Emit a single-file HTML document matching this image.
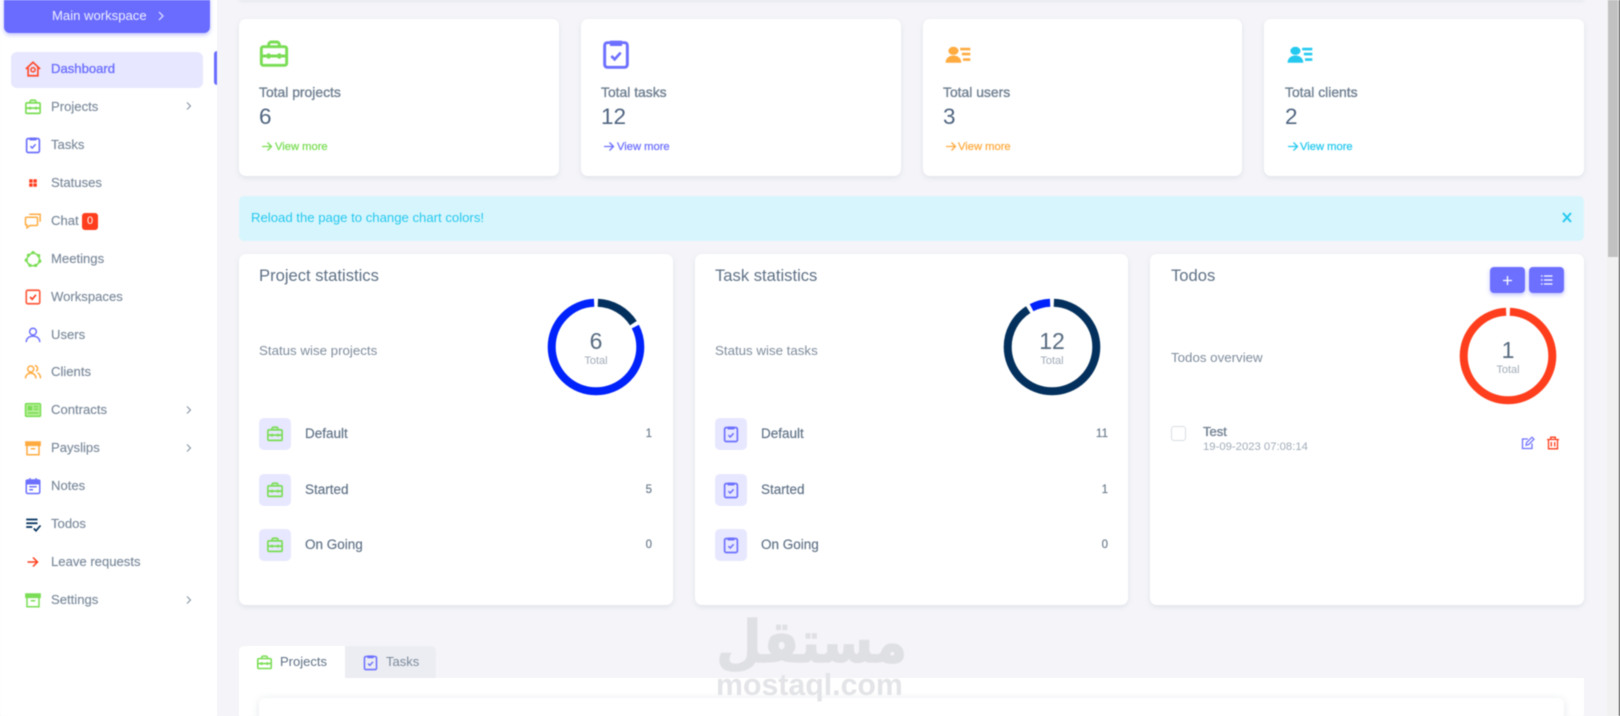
<!DOCTYPE html>
<html><head><meta charset="utf-8">
<style>
html,body{margin:0;padding:0;width:1620px;height:716px;overflow:hidden;background:#f5f5f9}
body{font-family:"Liberation Sans",sans-serif;position:relative;color:#566a7f}
#w{position:absolute;left:0;top:0;width:1620px;height:716px;overflow:hidden;filter:blur(.4px)}
.a{position:absolute}
.t{position:absolute;white-space:nowrap;line-height:20px}
.card{position:absolute;background:#fff;border-radius:7px;box-shadow:0 2px 6px rgba(67,89,113,.12)}
.n{position:absolute;left:51px;white-space:nowrap;line-height:20px;font-size:13.1px;color:#7b8a9b;-webkit-text-stroke:.15px #7b8a9b}
.l{font-size:13.9px;color:#6f7f90;-webkit-text-stroke:.35px #6f7f90}
.v{font-size:22.5px;color:#4f6480}
.m{font-size:11.2px;-webkit-text-stroke:.25px currentColor}
.h{font-size:16.6px;color:#5f7186}
.s{font-size:13.3px;color:#7f8d9d}
.r{font-size:13.5px;color:#5f7186;-webkit-text-stroke:.15px #5f7186}
.c{font-size:11.5px;color:#6f7f90;text-align:right;-webkit-text-stroke:.2px #6f7f90}
.b{position:absolute;width:32px;height:32px;border-radius:5px;background:#e7e7ff}
svg{position:absolute;overflow:visible}
.tot{position:absolute;text-align:center;width:80px;font-size:11px;color:#a1acb8;line-height:14px}
.num{position:absolute;text-align:center;width:80px;font-size:23px;color:#566a7f;line-height:26px}
</style></head><body><div id="w">
<svg width="0" height="0" style="position:absolute">
<defs>
<symbol id="bag" viewBox="0 0 24 24"><path d="M8 6.500V5a2 2 0 0 1 2-2h4a2 2 0 0 1 2 2v1.500M4 6.500h16a1.500 1.500 0 0 1 1.500 1.500v11a1.500 1.500 0 0 1-1.500 1.500H4A1.500 1.500 0 0 1 2.500 19V8A1.500 1.500 0 0 1 4 6.500zM2.500 13.500h19M8 11.500v4M16 11.500v4" fill="none" stroke="currentColor" stroke-width="2.200" stroke-linejoin="round"/></symbol>
<symbol id="task" viewBox="0 0 24 24"><rect x="3.500" y="3.500" width="17" height="18.500" rx="2" fill="none" stroke="currentColor" stroke-width="2.200"/><rect x="7.500" y="2" width="9" height="4" fill="currentColor"/><path d="M8.500 13.500l2.500 2.500 4.500-5" fill="none" stroke="currentColor" stroke-width="2"/></symbol>
<symbol id="ul" viewBox="0 0 24 24"><circle cx="7.500" cy="7.500" r="4.500" fill="currentColor"/><path d="M0.500 20.500c0-5 3-8 7-8s7 3 7 8z" fill="currentColor"/><path d="M13.500 5.500h9M15 11h7.500M16 17h6.500" stroke="currentColor" stroke-width="2.800" fill="none"/></symbol>
</defs></svg>

<!-- Sidebar -->
<div class="a" style="left:0;top:0;width:217px;height:716px;background:#fff"></div>
<div class="a" style="left:4px;top:-6px;width:206px;height:39px;background:#696cff;border-radius:6px;box-shadow:0 2px 4px rgba(105,108,255,.4)"></div>
<div class="t" style="left:52px;top:6px;font-size:13.1px;color:#eeeeff">Main workspace</div>
<svg style="left:156px;top:10px" width="10" height="12" viewBox="0 0 10 12"><path d="M3 2l4 4-4 4" fill="none" stroke="#e8e8ff" stroke-width="1.200"/></svg>
<div class="a" style="left:11px;top:52px;width:192px;height:36px;background:#e7e7ff;border-radius:6px"></div>
<div class="a" style="left:214px;top:51px;width:3px;height:34px;background:#696cff;border-radius:3px 0 0 3px"></div>

<div class="n" style="top:59px;color:#6d70ff;-webkit-text-stroke:.35px #6d70ff">Dashboard</div>
<div class="n" style="top:97px">Projects</div>
<div class="n" style="top:135px">Tasks</div>
<div class="n" style="top:173px">Statuses</div>
<div class="n" style="top:211px">Chat</div>
<div class="a" style="left:82px;top:213px;width:16px;height:17px;background:#ff3e1d;border-radius:3px;color:#fff;font-size:11px;line-height:17px;text-align:center">0</div>
<div class="n" style="top:249px">Meetings</div>
<div class="n" style="top:287px">Workspaces</div>
<div class="n" style="top:325px">Users</div>
<div class="n" style="top:362px">Clients</div>
<div class="n" style="top:400px">Contracts</div>
<div class="n" style="top:438px">Payslips</div>
<div class="n" style="top:476px">Notes</div>
<div class="n" style="top:514px">Todos</div>
<div class="n" style="top:552px">Leave requests</div>
<div class="n" style="top:590px">Settings</div>

<svg style="left:184px;top:100px" width="10" height="12" viewBox="0 0 10 12"><path d="M3 2.500l3.500 3.500-3.500 3.500" fill="none" stroke="#8592a3" stroke-width="1.100"/></svg>
<svg style="left:184px;top:404px" width="10" height="12" viewBox="0 0 10 12"><path d="M3 2.500l3.500 3.500-3.500 3.500" fill="none" stroke="#8592a3" stroke-width="1.100"/></svg>
<svg style="left:184px;top:442px" width="10" height="12" viewBox="0 0 10 12"><path d="M3 2.500l3.500 3.500-3.500 3.500" fill="none" stroke="#8592a3" stroke-width="1.100"/></svg>
<svg style="left:184px;top:594px" width="10" height="12" viewBox="0 0 10 12"><path d="M3 2.500l3.500 3.500-3.500 3.500" fill="none" stroke="#8592a3" stroke-width="1.100"/></svg>

<!-- sidebar icons -->
<svg style="left:24px;top:60px" width="18" height="18" viewBox="0 0 24 24"><path d="M2.500 12L12 3l9.500 9M5.500 10v11h13V10" fill="none" stroke="#ff4a2b" stroke-width="2.200"/><circle cx="12" cy="13" r="2.800" fill="none" stroke="#ff4a2b" stroke-width="2"/></svg>
<svg style="left:24px;top:98px;color:#7add55" width="18" height="18" viewBox="0 0 24 24"><use href="#bag"/></svg>
<svg style="left:24px;top:136px;color:#6d70ff" width="18" height="18" viewBox="0 0 24 24"><use href="#task"/></svg>
<svg style="left:24px;top:174px" width="18" height="18" viewBox="0 0 18 18"><path d="M5.200 5.200h3.400v3.400H5.200zM9.400 5.200h3.400v3.400H9.400zM5.200 9.400h3.400v3.400H5.200zM9.400 9.400h3.400v3.400H9.400z" fill="#ff3e1d"/></svg>
<svg style="left:24px;top:212px" width="18" height="18" viewBox="0 0 24 24"><path d="M3.500 7h13a1.500 1.500 0 0 1 1.500 1.500v8a1.500 1.500 0 0 1-1.500 1.500H8l-4 3v-3.500A1.500 1.500 0 0 1 2 16.500v-8A1.500 1.500 0 0 1 3.500 7zM7 3h14.500v10" fill="none" stroke="#ffab40" stroke-width="2"/></svg>
<svg style="left:24px;top:250px" width="18" height="18" viewBox="0 0 24 24"><path d="M6 7.500L12 3l7.500 4.500 2 7.500L16 21H8l-5.500-7z" fill="none" stroke="#7add55" stroke-width="2"/><g fill="#7add55"><circle cx="12" cy="3.500" r="2.200"/><circle cx="19.500" cy="7.500" r="2.200"/><circle cx="21" cy="15" r="2.200"/><circle cx="15.500" cy="20.500" r="2.200"/><circle cx="8" cy="20.500" r="2.200"/><circle cx="3" cy="13.500" r="2.200"/><circle cx="6" cy="7" r="2.200"/></g></svg>
<svg style="left:24px;top:288px" width="18" height="18" viewBox="0 0 24 24"><rect x="3" y="3" width="18" height="18" rx="2" fill="none" stroke="#ff5a3c" stroke-width="2.200"/><path d="M8 12l3 3 5-6" fill="none" stroke="#ff3e1d" stroke-width="2.200"/></svg>
<svg style="left:24px;top:326px" width="18" height="18" viewBox="0 0 24 24"><circle cx="12" cy="7.500" r="4.500" fill="none" stroke="#6d70ff" stroke-width="2"/><path d="M3 21.500c0-5 4-8 9-8s9 3 9 8" fill="none" stroke="#6d70ff" stroke-width="2"/></svg>
<svg style="left:24px;top:363px" width="18" height="18" viewBox="0 0 24 24"><circle cx="9" cy="8" r="4" fill="none" stroke="#ffab40" stroke-width="2"/><path d="M2 20.500c0-4 3-7 7-7s7 3 7 7M14.500 3.500a4 4 0 0 1 1.500 7.500M18 13c2.500 1.200 4 4 4 7.500" fill="none" stroke="#ffab40" stroke-width="2"/></svg>
<svg style="left:24px;top:401px" width="18" height="18" viewBox="0 0 24 24"><rect x="2" y="3.500" width="20" height="17" rx="1.500" fill="#b5ef96" stroke="#7add55" stroke-width="2"/><path d="M5 6.500h6v6H5z" fill="#7add55"/><path d="M13 7.500h6M13 11h6M5 16h14" stroke="#7add55" stroke-width="2" fill="none"/></svg>
<svg style="left:24px;top:439px" width="18" height="18" viewBox="0 0 24 24"><path d="M2.500 4h19v4.500h-19z" fill="#ffab40" stroke="#ffab40" stroke-width="2"/><path d="M4 8.500V21h16V8.500M9 13h6" fill="none" stroke="#ffab40" stroke-width="2"/></svg>
<svg style="left:24px;top:477px" width="18" height="18" viewBox="0 0 24 24"><rect x="3" y="4" width="18" height="18" rx="2" fill="none" stroke="#6d70ff" stroke-width="2"/><path d="M3 5h18v4H3zM8 1.500v4M16 1.500v4" fill="#6d70ff" stroke="#6d70ff" stroke-width="2"/><path d="M7 13h10M7 17h5" stroke="#6d70ff" stroke-width="2" fill="none"/></svg>
<svg style="left:24px;top:515px" width="18" height="18" viewBox="0 0 24 24"><path d="M3 6h15M3 11h15M3 16h8" stroke="#03305c" stroke-width="2.400" fill="none"/><path d="M13 18l3 3 6-7" stroke="#03305c" stroke-width="2.200" fill="none"/></svg>
<svg style="left:27px;top:556px" width="12" height="12" viewBox="0 0 24 24"><path d="M1 12h20M12 3l9 9-9 9" fill="none" stroke="#ff3e1d" stroke-width="3"/></svg>
<svg style="left:24px;top:591px" width="18" height="18" viewBox="0 0 24 24"><path d="M2.500 4h19v4.500h-19z" fill="#7add55" stroke="#7add55" stroke-width="2"/><path d="M4 8.500V21h16V8.500M9 13h6" fill="none" stroke="#7add55" stroke-width="2"/></svg>

<!-- top navbar shadow -->
<div class="a" style="left:239px;top:-10px;width:1345px;height:10px;background:#fff;box-shadow:0 1px 4px rgba(67,89,113,.12)"></div>

<!-- Stats cards -->
<div class="card" style="left:239px;top:19px;width:320px;height:157px"></div>
<div class="card" style="left:581px;top:19px;width:320px;height:157px"></div>
<div class="card" style="left:923px;top:19px;width:319px;height:157px"></div>
<div class="card" style="left:1264px;top:19px;width:320px;height:157px"></div>

<svg style="left:258px;top:38px;color:#7add55" width="32" height="32" viewBox="0 0 24 24"><use href="#bag"/></svg>
<svg style="left:600px;top:38px;color:#6d70ff" width="32" height="32" viewBox="0 0 24 24"><use href="#task"/></svg>
<svg style="left:945px;top:44px;color:#ffab40" width="27" height="22" viewBox="0 0 24 24" preserveAspectRatio="none"><use href="#ul"/></svg>
<svg style="left:1287px;top:44px;color:#25c9ef" width="27" height="22" viewBox="0 0 24 24" preserveAspectRatio="none"><use href="#ul"/></svg>

<div class="t l" style="left:259px;top:82px">Total projects</div>
<div class="t l" style="left:601px;top:82px">Total tasks</div>
<div class="t l" style="left:943px;top:82px">Total users</div>
<div class="t l" style="left:1285px;top:82px">Total clients</div>
<div class="t v" style="left:259px;top:107px">6</div>
<div class="t v" style="left:601px;top:107px">12</div>
<div class="t v" style="left:943px;top:107px">3</div>
<div class="t v" style="left:1285px;top:107px">2</div>

<svg style="left:261px;top:141px" width="12" height="11" viewBox="0 0 12 11"><path d="M1 5.500h9.500M6.500 1.500l4 4-4 4" fill="none" stroke="#7add55" stroke-width="1.300"/></svg>
<div class="t m" style="left:275px;top:137px;color:#7add55">View more</div>
<svg style="left:603px;top:141px" width="12" height="11" viewBox="0 0 12 11"><path d="M1 5.500h9.500M6.500 1.500l4 4-4 4" fill="none" stroke="#6d70ff" stroke-width="1.300"/></svg>
<div class="t m" style="left:617px;top:137px;color:#6d70ff">View more</div>
<svg style="left:945px;top:141px" width="12" height="11" viewBox="0 0 12 11"><path d="M1 5.500h9.500M6.500 1.500l4 4-4 4" fill="none" stroke="#ffab40" stroke-width="1.300"/></svg>
<div class="t m" style="left:958px;top:137px;color:#ffab40">View more</div>
<svg style="left:1287px;top:141px" width="12" height="11" viewBox="0 0 12 11"><path d="M1 5.500h9.500M6.500 1.500l4 4-4 4" fill="none" stroke="#25c9ef" stroke-width="1.300"/></svg>
<div class="t m" style="left:1300px;top:137px;color:#25c9ef">View more</div>

<!-- Alert -->
<div class="a" style="left:239px;top:196px;width:1345px;height:45px;background:#d7f5fc;border-radius:5px"></div>
<div class="t" style="left:251px;top:208px;font-size:13.15px;color:#25c9ef">Reload the page to change chart colors!</div>
<svg style="left:1562px;top:212px" width="10" height="11" viewBox="0 0 10 11"><path d="M1 1l8 9M9 1l-8 9" stroke="#25c9ef" stroke-width="2" fill="none"/></svg>

<!-- Stat panels -->
<div class="card" style="left:239px;top:254px;width:434px;height:351px"></div>
<div class="card" style="left:695px;top:254px;width:433px;height:351px"></div>
<div class="card" style="left:1150px;top:254px;width:434px;height:351px"></div>

<div class="t h" style="left:259px;top:266px">Project statistics</div>
<div class="t h" style="left:715px;top:266px">Task statistics</div>
<div class="t h" style="left:1171px;top:266px">Todos</div>

<div class="t s" style="left:259px;top:341px">Status wise projects</div>
<div class="t s" style="left:715px;top:341px">Status wise tasks</div>
<div class="t s" style="left:1171px;top:348px">Todos overview</div>

<!-- donuts -->
<svg style="left:546px;top:297px" width="100" height="100" viewBox="0 0 100 100"><g fill="none" stroke-width="8" transform="rotate(-90 50 50)">
<circle cx="50" cy="50" r="44.300" pathLength="360" stroke="#03305c" stroke-dasharray="55 305" stroke-dashoffset="-2.500"/>
<circle cx="50" cy="50" r="44.300" pathLength="360" stroke="#0022fb" stroke-dasharray="295 65" stroke-dashoffset="-62.500"/></g></svg>
<svg style="left:1002px;top:297px" width="100" height="100" viewBox="0 0 100 100"><g fill="none" stroke-width="8" transform="rotate(-90 50 50)">
<circle cx="50" cy="50" r="44.300" pathLength="360" stroke="#03305c" stroke-dasharray="325 35" stroke-dashoffset="-2.500"/>
<circle cx="50" cy="50" r="44.300" pathLength="360" stroke="#0022fb" stroke-dasharray="25 335" stroke-dashoffset="-332.500"/></g></svg>
<svg style="left:1458px;top:306px" width="100" height="100" viewBox="0 0 100 100"><g fill="none" stroke-width="8" transform="rotate(-90 50 50)">
<circle cx="50" cy="50" r="44.300" pathLength="360" stroke="#ff3e1d" stroke-dasharray="355 5" stroke-dashoffset="-2.500"/></g></svg>

<div class="num" style="left:556px;top:328px">6</div><div class="tot" style="left:556px;top:354px">Total</div>
<div class="num" style="left:1012px;top:328px">12</div><div class="tot" style="left:1012px;top:354px">Total</div>
<div class="num" style="left:1468px;top:337px">1</div><div class="tot" style="left:1468px;top:363px">Total</div>

<!-- project rows -->
<div class="b" style="left:259px;top:418px"></div><div class="b" style="left:259px;top:474px"></div><div class="b" style="left:259px;top:529px"></div>
<svg style="left:266px;top:425px;color:#7add55" width="18" height="18" viewBox="0 0 24 24"><use href="#bag"/></svg>
<svg style="left:266px;top:481px;color:#7add55" width="18" height="18" viewBox="0 0 24 24"><use href="#bag"/></svg>
<svg style="left:266px;top:536px;color:#7add55" width="18" height="18" viewBox="0 0 24 24"><use href="#bag"/></svg>
<div class="t r" style="left:305px;top:424px">Default</div>
<div class="t r" style="left:305px;top:480px">Started</div>
<div class="t r" style="left:305px;top:535px">On Going</div>
<div class="t c" style="right:968px;top:424px">1</div>
<div class="t c" style="right:968px;top:480px">5</div>
<div class="t c" style="right:968px;top:535px">0</div>

<!-- task rows -->
<div class="b" style="left:715px;top:418px"></div><div class="b" style="left:715px;top:474px"></div><div class="b" style="left:715px;top:529px"></div>
<svg style="left:722px;top:425px;color:#6d70ff" width="18" height="18" viewBox="0 0 24 24"><use href="#task"/></svg>
<svg style="left:722px;top:481px;color:#6d70ff" width="18" height="18" viewBox="0 0 24 24"><use href="#task"/></svg>
<svg style="left:722px;top:536px;color:#6d70ff" width="18" height="18" viewBox="0 0 24 24"><use href="#task"/></svg>
<div class="t r" style="left:761px;top:424px">Default</div>
<div class="t r" style="left:761px;top:480px">Started</div>
<div class="t r" style="left:761px;top:535px">On Going</div>
<div class="t c" style="right:512px;top:424px">11</div>
<div class="t c" style="right:512px;top:480px">1</div>
<div class="t c" style="right:512px;top:535px">0</div>

<!-- Todo -->
<div class="a" style="left:1490px;top:267px;width:35px;height:26px;background:#6d70ff;border-radius:4px;box-shadow:0 2px 4px rgba(105,108,255,.4)"></div>
<div class="a" style="left:1529px;top:267px;width:35px;height:26px;background:#6d70ff;border-radius:4px;box-shadow:0 2px 4px rgba(105,108,255,.4)"></div>
<svg style="left:1502px;top:275px" width="11" height="11" viewBox="0 0 11 11"><path d="M5.500 1v9M1 5.500h9" stroke="#fff" stroke-width="1.300" fill="none"/></svg>
<svg style="left:1540px;top:274px" width="13" height="12" viewBox="0 0 13 12"><path d="M1 2h1.500M1 6h1.500M1 10h1.500M4 2h8.500M4 6h8.500M4 10h8.500" stroke="#fff" stroke-width="1.200" fill="none"/></svg>

<div class="a" style="left:1171px;top:426px;width:13px;height:13px;border:1px solid #d9dee3;border-radius:3px;background:#fff"></div>
<div class="t" style="left:1203px;top:422px;font-size:13px;color:#6f7f90;-webkit-text-stroke:.35px #6f7f90">Test</div>
<div class="t" style="left:1203px;top:437px;font-size:11.3px;color:#a1acb8">19-09-2023 07:08:14</div>
<svg style="left:1521px;top:436px" width="14" height="14" viewBox="0 0 14 14"><path d="M11 7.500V12.500H1.500V3H7" fill="none" stroke="#6d70ff" stroke-width="1.300"/><path d="M5 9.200l.5-2.500L11 1.200l2 2-5.500 5.500z" fill="none" stroke="#6d70ff" stroke-width="1.200"/></svg>
<svg style="left:1546px;top:436px" width="14" height="14" viewBox="0 0 14 14"><path d="M1 3.500h12M4.700 3.500V1.200h4.600v2.300M2.500 3.500v9.300h9V3.500M5.300 6v4.500M8.700 6v4.500" fill="none" stroke="#ff3e1d" stroke-width="1.300"/></svg>

<!-- Tabs -->
<div class="a" style="left:345px;top:646px;width:91px;height:32px;background:#ecedf2;border-radius:0 5px 0 0"></div>
<div class="a" style="left:239px;top:646px;width:106px;height:32px;background:#fff;border-radius:5px 0 0 0"></div>
<div class="a" style="left:239px;top:678px;width:1345px;height:40px;background:#fff"></div>
<div class="a" style="left:259px;top:698px;width:1305px;height:40px;background:#fff;border-radius:6px;box-shadow:0 1px 8px rgba(67,89,113,.14)"></div>
<svg style="left:256px;top:654px;color:#7add55" width="17" height="17" viewBox="0 0 24 24"><use href="#bag"/></svg>
<div class="t" style="left:280px;top:652px;font-size:13px;color:#5f7186">Projects</div>
<svg style="left:362px;top:654px;color:#6d70ff" width="17" height="17" viewBox="0 0 24 24"><use href="#task"/></svg>
<div class="t" style="left:386px;top:652px;font-size:13px;color:#7b8a9b">Tasks</div>

<!-- Watermark -->
<div class="t" dir="rtl" style="left:712px;top:624px;width:196px;text-align:center;font-family:'DejaVu Sans',sans-serif;font-weight:bold;font-size:58px;line-height:36px;color:#dfe0e3;-webkit-text-stroke:1.200px #dfe0e3;transform:scaleX(.9) translateX(10px)">مستقل</div>
<div class="t" style="left:716px;top:669px;font-size:30.300px;line-height:34px;font-weight:bold;color:#e3e4e7">mostaql.com</div>

<!-- Scrollbar -->
<div class="a" style="left:1607px;top:0;width:12px;height:716px;background:#f1f1f1"></div>
<div class="a" style="left:1608px;top:0;width:10px;height:257px;background:#c1c1c1"></div>
<div class="a" style="left:1619px;top:0;width:1px;height:716px;background:#333"></div>
</div></body></html>
